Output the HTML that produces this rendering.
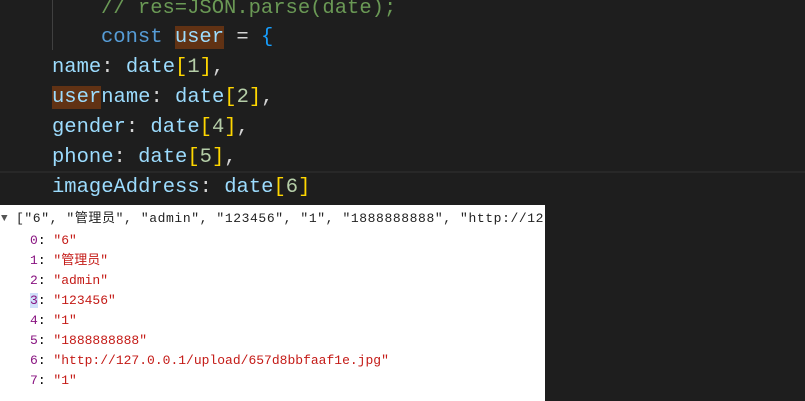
<!DOCTYPE html>
<html><head><meta charset="utf-8"><style>
body{margin:0;width:805px;height:401px;background:#1e1e1e;overflow:hidden;position:relative;font-family:"Liberation Mono","Noto Sans CJK SC",monospace}
.c{position:absolute;left:0;font-size:20.5px;white-space:pre;line-height:30px;color:#9cdcfe}
.y{color:#ffd700}.n{color:#b5cea8}.w{color:#d4d4d4}.k{color:#569cd6}.cm{color:#6a9955}
.hl{background:#613214}
.con{position:absolute;left:0;top:205px;width:545px;height:196px;background:#fff;font-size:13px;white-space:pre;overflow:hidden}
.con div{position:absolute;line-height:20px}
.i{color:#881280}.s{color:#c41a16}.b{color:#222}
</style></head><body>
<div style="position:absolute;left:52px;top:0;width:1px;height:50px;background:#404040"></div>
<div style="position:absolute;left:0;top:171px;width:805px;height:2px;background:#282828"></div>
<div class="c cm" style="top:-6px;left:101px">// res=JSON.parse(date);</div>
<div class="c" style="top:23px;left:101px"><span class="k">const</span> <span class="hl">user</span><span class="w"> = </span><span style="color:#179fff">{</span></div>
<div class="c" style="top:53px;left:52px">name<span class="w">: </span>date<span class="y">[</span><span class="n">1</span><span class="y">]</span><span class="w">,</span></div>
<div class="c" style="top:83px;left:52px"><span class="hl">user</span>name<span class="w">: </span>date<span class="y">[</span><span class="n">2</span><span class="y">]</span><span class="w">,</span></div>
<div class="c" style="top:113px;left:52px">gender<span class="w">: </span>date<span class="y">[</span><span class="n">4</span><span class="y">]</span><span class="w">,</span></div>
<div class="c" style="top:143px;left:52px">phone<span class="w">: </span>date<span class="y">[</span><span class="n">5</span><span class="y">]</span><span class="w">,</span></div>
<div class="c" style="top:173px;left:52px">imageAddress<span class="w">: </span>date<span class="y">[</span><span class="n">6</span><span class="y">]</span></div>
<div class="con">
<div style="top:4px;left:1px;font-size:11px;color:#555">▼</div>
<div class="b" style="top:4px;left:16px;letter-spacing:0.6px">["6", "管理员", "admin", "123456", "1", "1888888888", "http://127.0.0.1/</div>
<div style="top:26px;left:30px"><span class="i">0</span>: <span class="s">"6"</span></div>
<div style="top:46px;left:30px"><span class="i">1</span>: <span class="s">"管理员"</span></div>
<div style="top:66px;left:30px"><span class="i">2</span>: <span class="s">"admin"</span></div>
<div style="top:86px;left:30px"><span class="i" style="background:#cfe0fa">3</span>: <span class="s">"123456"</span></div>
<div style="top:106px;left:30px"><span class="i">4</span>: <span class="s">"1"</span></div>
<div style="top:126px;left:30px"><span class="i">5</span>: <span class="s">"1888888888"</span></div>
<div style="top:146px;left:30px"><span class="i">6</span>: <span class="s">"http://127.0.0.1/upload/657d8bbfaaf1e.jpg"</span></div>
<div style="top:166px;left:30px"><span class="i">7</span>: <span class="s">"1"</span></div>
</div>
</body></html>
